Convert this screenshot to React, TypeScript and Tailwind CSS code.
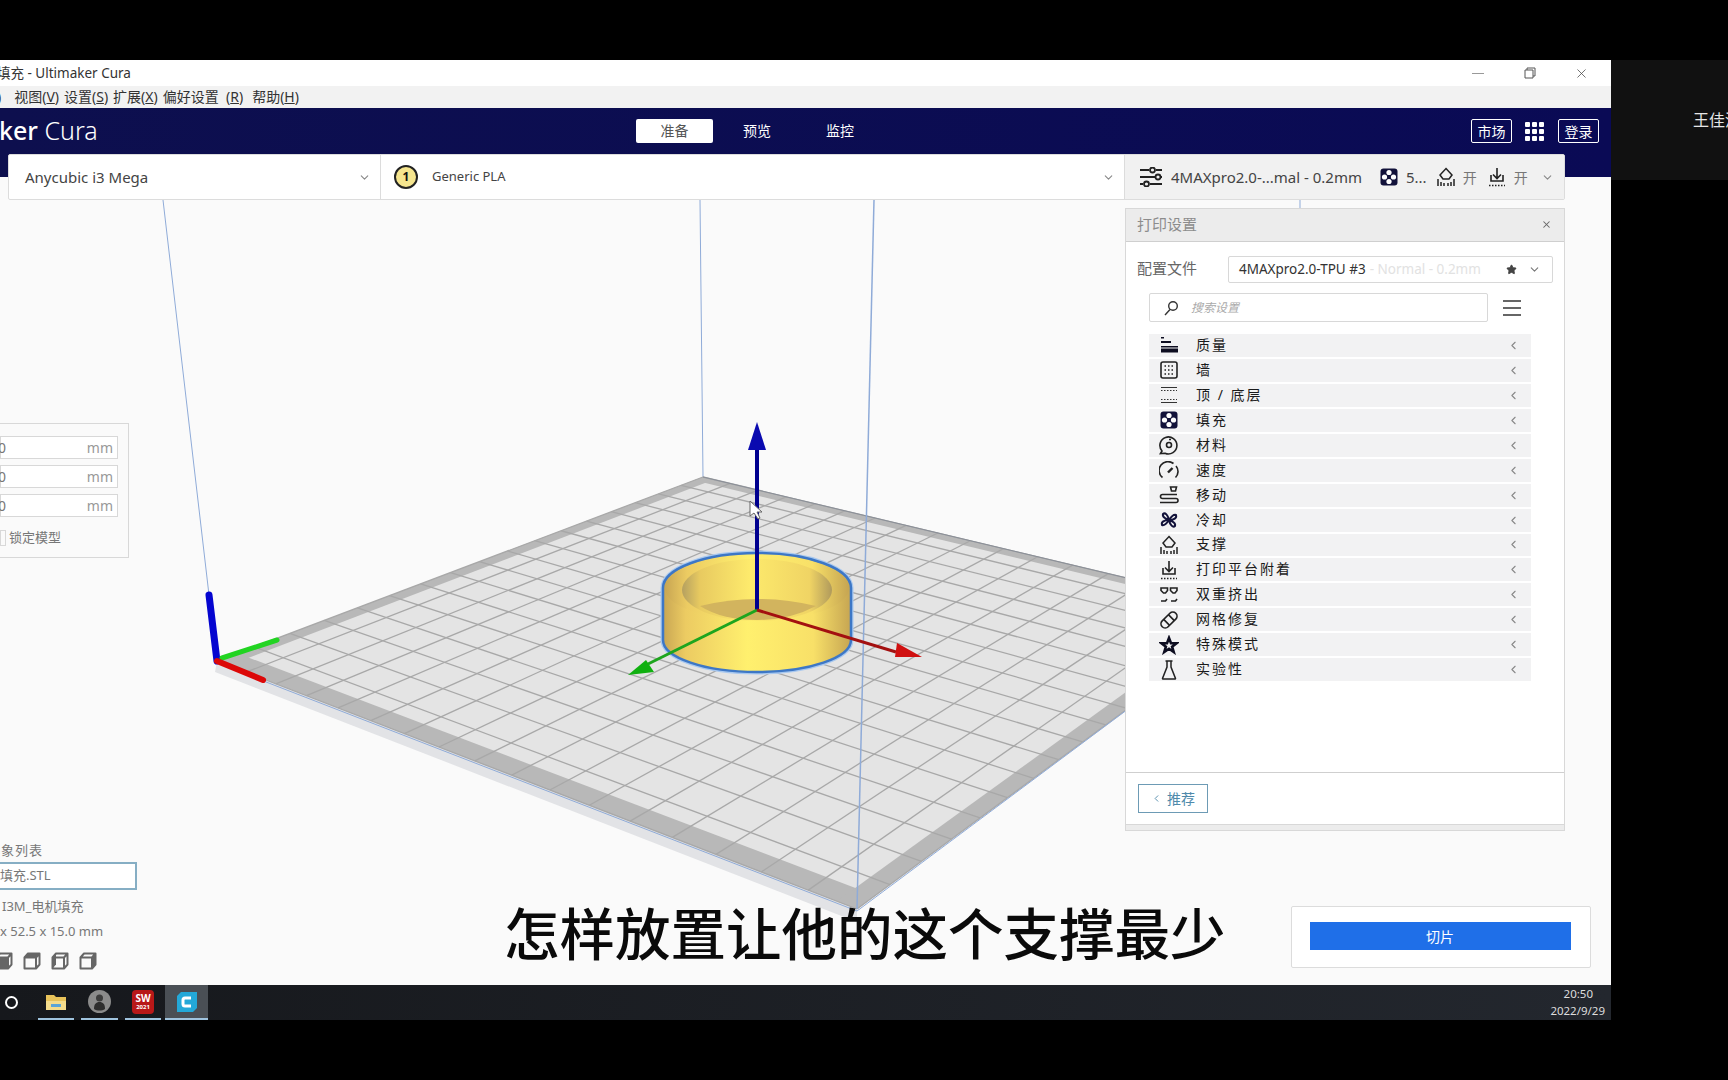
import React from "react"
import { ChevronDown, ChevronLeft, Star, X } from "lucide-react"

const ui = "font-['Noto_Sans','Noto_Sans_CJK_SC',sans-serif]"

const rows = [
  "质量",
  "墙",
  "顶 / 底层",
  "填充",
  "材料",
  "速度",
  "移动",
  "冷却",
  "支撑",
  "打印平台附着",
  "双重挤出",
  "网格修复",
  "特殊模式",
  "实验性",
]

const InfillIcon = ({ size = 18 }: { size?: number }) => (
  <svg width={size} height={size} viewBox="0 0 18 18">
    <rect x="0.5" y="0.5" width="17" height="17" rx="3" fill="#12123a" />
    <circle cx="9" cy="4.500" r="2.600" fill="#fff" />
    <circle cx="9" cy="13.500" r="2.600" fill="#fff" />
    <circle cx="4.500" cy="9" r="2.600" fill="#fff" />
    <circle cx="13.500" cy="9" r="2.600" fill="#fff" />
  </svg>
)

const SupportIcon = () => (
  <svg width="18" height="20" viewBox="0 0 18 20" fill="none" stroke="#222" strokeWidth="1.500">
    <path d="M9 1.500 15 8 12 12H6L3 8Z" />
    <path d="M1 19v-7M4 19v-4M7 19v-3M11 19v-3M14 19v-4M17 19v-7" />
  </svg>
)

const AdhesionIcon = () => (
  <svg width="18" height="20" viewBox="0 0 18 20" fill="none" stroke="#222" strokeWidth="1.600">
    <path d="M9 1v10M5 7.500 9 11.500 13 7.500M3 8v6h12V8" />
    <path d="M1 18.500h16" strokeDasharray="1.500 1.500" />
  </svg>
)

const SettingIcon = ({ index }: { index: number }) => {
  if (index === 0)
    return (
      <svg width="18" height="18" viewBox="0 0 18 18" fill="#0d0d20">
        <rect x="1" y="1" width="3" height="1.500" />
        <rect x="1" y="5" width="10" height="2" />
        <rect x="1" y="10" width="17" height="1.500" />
        <rect x="1" y="12.500" width="17" height="4" />
      </svg>
    )
  if (index === 1)
    return (
      <svg width="18" height="18" viewBox="0 0 18 18" fill="none" stroke="#222" strokeWidth="1.600">
        <rect x="1" y="1" width="16" height="16" rx="2" />
        <path d="M4.500 5h9M4.500 9h9M4.500 13h9" strokeDasharray="1.500 2" />
      </svg>
    )
  if (index === 2)
    return (
      <svg width="18" height="18" viewBox="0 0 18 18" fill="none" stroke="#333" strokeWidth="1">
        <path d="M1 1.500h16M1 16.500h16" />
        <path d="M1 4.500h16M1 13.500h16" strokeDasharray="1.500 1.500" />
      </svg>
    )
  if (index === 3) return <InfillIcon />
  if (index === 4)
    return (
      <svg width="20" height="20" viewBox="0 0 20 20" fill="none" stroke="#222" strokeWidth="1.600">
        <path d="M1.500 18.500 3 16A8.500 8.500 0 1 1 6 18.200Z" />
        <circle cx="10" cy="10" r="2.500" />
        <path d="M10 4.500h2" />
      </svg>
    )
  if (index === 5)
    return (
      <svg width="20" height="18" viewBox="0 0 20 18" fill="none" stroke="#222" strokeWidth="1.600">
        <path d="M3.500 16.500A8.500 8.500 0 0 1 14.500 2.500M17 5a8.500 8.500 0 0 1-.5 11.500" />
        <path d="M9 11.500 13.500 7" strokeWidth="2.400" />
      </svg>
    )
  if (index === 6)
    return (
      <svg width="20" height="18" viewBox="0 0 20 18" fill="none" stroke="#222" strokeWidth="1.600">
        <path d="M18 8.500H3.500a2 2 0 0 0 0 4H17a2 2 0 0 1 0 4H1" />
        <path d="M11.500 1h6l-1 4h-4Z" />
      </svg>
    )
  if (index === 7)
    return (
      <svg width="18" height="18" viewBox="0 0 18 18" fill="none" stroke="#12123a" strokeWidth="2">
        <path d="M9 9C6 8 2 6 3 3 5 1 8 4 9 9ZM9 9c2-3 4-6 7-5 1 3-2 5-7 5ZM9 9c3 1 7 3 6 6-2 2-5-1-6-6ZM9 9c-2 3-4 6-7 5-1-3 2-5 7-5Z" />
      </svg>
    )
  if (index === 8) return <SupportIcon />
  if (index === 9) return <AdhesionIcon />
  if (index === 10)
    return (
      <svg width="18" height="16" viewBox="0 0 18 16" fill="none" stroke="#222" strokeWidth="1.600">
        <path d="M1 1h6.500v2.500L5.500 6h-2L1 3.500ZM10.500 1H17v2.500L15 6h-2l-2.500-2.500Z" />
        <path d="M1 14h4.500l1.500-2M11 14h4.500l1.500-2" />
      </svg>
    )
  if (index === 11)
    return (
      <svg width="20" height="20" viewBox="0 0 24 24" fill="none" stroke="#222" strokeWidth="2">
        <g transform="rotate(-45 12 12)">
          <rect x="0.500" y="7" width="23" height="10" rx="5" />
          <path d="M8 7v10M16 7v10" />
        </g>
      </svg>
    )
  if (index === 12)
    return (
      <svg width="20" height="20" viewBox="0 0 20 20" fill="none" stroke="#0d0d20" strokeWidth="2.600" strokeLinejoin="miter">
        <path d="M10 3 12 8.300H17.500l-4.400 3.400L14.700 17 10 13.800 5.300 17l1.600-5.300L2.500 8.300H8Z" />
      </svg>
    )
  return (
    <svg width="16" height="20" viewBox="0 0 16 20" fill="none" stroke="#222" strokeWidth="1.500">
      <path d="M4.500 1h7M6 1v6L1.500 18.500a.5.5 0 0 0 .5.500h12a.5.5 0 0 0 .5-.500L10 7V1" />
    </svg>
  )
}

const P = [
  [703, 477],
  [1261, 610],
  [857, 909],
  [217, 661],
]

// homography from the unit square onto the bed's four corners
const project = (u: number, v: number) => {
  const [[x0, y0], [x1, y1], [x2, y2], [x3, y3]] = P
  const dx1 = x1 - x2
  const dx2 = x3 - x2
  const sx = x0 - x1 + x2 - x3
  const dy1 = y1 - y2
  const dy2 = y3 - y2
  const sy = y0 - y1 + y2 - y3
  const den = dx1 * dy2 - dx2 * dy1
  const g = (sx * dy2 - dx2 * sy) / den
  const h = (dx1 * sy - sx * dy1) / den
  const w = g * u + h * v + 1
  return [
    ((x1 - x0 + g * x1) * u + (x3 - x0 + h * x3) * v + x0) / w,
    ((y1 - y0 + g * y1) * u + (y3 - y0 + h * y3) * v + y0) / w,
  ]
}

const poly = (pts: number[][]) => pts.map((p) => p.join(",")).join(" ")

const Scene = () => {
  const n = 17
  const b = 0.024
  const f = 0.032
  const ticks = Array.from({ length: n + 1 }, (_, i) => i / n)
  const bands = [
    [[0, 0], [1, 0], [1, b], [0, b]],
    [[0, 1 - f], [1, 1 - f], [1, 1], [0, 1]],
    [[0, 0], [b, 0], [b, 1], [0, 1]],
    [[1 - b, 0], [1, 0], [1, 1], [1 - b, 1]],
  ]
  return (
    <svg className="absolute inset-0" width="1611" height="808" viewBox="0 177 1611 808">
      <defs>
        <linearGradient id="body" x1="0" x2="1" y1="0" y2="0">
          <stop offset="0" stopColor="#c8a653" />
          <stop offset="0.12" stopColor="#eccb62" />
          <stop offset="0.45" stopColor="#fff06e" />
          <stop offset="0.8" stopColor="#f8e068" />
          <stop offset="1" stopColor="#c6a552" />
        </linearGradient>
        <linearGradient id="wall" x1="0" x2="1" y1="0" y2="0">
          <stop offset="0" stopColor="#b5a060" />
          <stop offset="0.12" stopColor="#e8ca60" />
          <stop offset="0.45" stopColor="#fdea6c" />
          <stop offset="0.85" stopColor="#f0d464" />
          <stop offset="1" stopColor="#b09a5c" />
        </linearGradient>
      </defs>

      <g stroke="#8fabd8" strokeWidth="1" fill="none">
        <path d="M163 200 209 595" />
        <path d="M700 200 703 477" />
        <path d="M1300 200v10" />
      </g>

      <polygon points="217,661 857,909 857,922 215,672" fill="#e2e3e6" />
      <polygon points={poly(P)} fill="#e4e4e4" />
      {bands.map((q, i) => (
        <polygon key={i} points={poly(q.map(([u, v]) => project(u, v)))} fill="#b8b8b8" />
      ))}
      <g stroke="#a8a8a8" strokeWidth="1.300">
        {ticks.map((t) => {
          const a = project(t, 0)
          const c = project(t, 1)
          const d = project(0, t)
          const e = project(1, t)
          return (
            <g key={t}>
              <line x1={a[0]} y1={a[1]} x2={c[0]} y2={c[1]} />
              <line x1={d[0]} y1={d[1]} x2={e[0]} y2={e[1]} />
            </g>
          )
        })}
      </g>
      <path d="M703 477 1261 610" stroke="#8a8f98" strokeWidth="1" />
      <path d="M217 663 857 911 1261 610" stroke="#8fabd8" strokeWidth="1" fill="none" />
      <path d="M874 200 857 909" stroke="#8fabd8" strokeWidth="1.500" />

      <path d="M663 588A94 35 0 0 1 851 588V640A94 32 0 0 1 663 640Z" fill="url(#body)" stroke="#a8c8ef" strokeWidth="5" />
      <path d="M663 588A94 35 0 0 1 851 588V640A94 32 0 0 1 663 640Z" fill="url(#body)" stroke="#3d77c6" strokeWidth="2.500" />
      <ellipse cx="757" cy="588" rx="92" ry="33" fill="url(#body)" />
      <ellipse cx="757" cy="590" rx="75" ry="31" fill="url(#wall)" />
      <path d="M700 606Q757 592 816 606 790 620 757 620 722 620 700 606Z" fill="#d2b45e" />

      <g fill="none" strokeLinecap="butt">
        <path d="M757 450V610" stroke="#00008f" strokeWidth="4" />
        <path d="M757 610 648 664" stroke="#1ea51e" strokeWidth="3" />
        <path d="M757 610 896 652" stroke="#a31010" strokeWidth="3" />
      </g>
      <polygon points="757,422 766,450 748,450" fill="#0a0ab0" />
      <polygon points="628,675 646,660 654,672" fill="#10b010" />
      <polygon points="922,657 897,643 895,657" fill="#d01010" />

      <path d="M750 501V516L754 513 758 519 760 518 757 512 762 512Z" fill="#fff" stroke="#666" strokeWidth="1" />

      <path d="M209 595 217 661" stroke="#0505d0" strokeWidth="7" strokeLinecap="round" />
      <path d="M222 658 277 640" stroke="#22d422" strokeWidth="5" strokeLinecap="round" />
      <path d="M217 661 263 680" stroke="#dc0808" strokeWidth="6" strokeLinecap="round" />
    </svg>
  )
}

const PrintSettings = () => (
  <div className="absolute left-[1125px] top-[31px] z-20 flex h-[623px] w-[440px] flex-col border border-[#d8d8d8] bg-white">
    <div className="flex h-[33px] shrink-0 items-center justify-between border-b border-[#cfcfcf] bg-[#ececec] pb-[2px] pl-[11px] pr-[13px] text-[15px] text-[#8c8c8c]">
      <span>打印设置</span>
      <X size={11} strokeWidth={2.200} className="-mr-[1px] text-[#666]" />
    </div>
    <div className="mt-[14px] flex items-center pl-[11px] pr-[11px]">
      <span className="w-[91px] shrink-0 pb-[2px] text-[15px] text-[#666]">配置文件</span>
      <div className="flex h-[27px] flex-1 items-center rounded-[2px] border border-[#d8d8d8] pl-[10px] pr-[11px] text-[13.500px]">
        <span className="text-[#333]">4MAXpro2.0-TPU #3</span>
        <span className="ml-1 text-[#e2e2e2]">- Normal - 0.2mm</span>
        <Star size={11} fill="#444" stroke="#444" className="ml-auto" />
        <ChevronDown size={13} className="ml-[11px] text-[#777]" />
      </div>
    </div>
    <div className="mt-[10px] flex items-center pl-[23px]">
      <div className="flex h-[29px] w-[339px] items-center gap-[12px] rounded-[2px] border border-[#d8d8d8] pl-[13px]">
        <svg width="16" height="16" viewBox="0 0 16 16" fill="none" stroke="#333" strokeWidth="1.400">
          <circle cx="10" cy="6" r="4.300" />
          <path d="M7 9.500 2 15" />
        </svg>
        <span className="text-[12px] italic text-[#aaa]">搜索设置</span>
      </div>
      <div className="ml-[15px] flex w-[18px] flex-col gap-[5px]">
        <div className="h-[2px] bg-[#666]" />
        <div className="h-[2px] bg-[#666]" />
        <div className="h-[2px] bg-[#666]" />
      </div>
    </div>
    <div className="mt-[12px] ml-[23px] flex w-[382px] flex-col gap-[2px]">
      {rows.map((row, i) => (
        <div key={row} className="flex h-[22.950px] items-center bg-[#f2f2f3] pr-[11px] text-[14px] tracking-[2px] text-[#1a1a1a]">
          <div className="flex w-[47px] shrink-0 justify-center pr-[7px]">
            <SettingIcon index={i} />
          </div>
          <span className="whitespace-pre pb-[2px]">{row}</span>
          <ChevronLeft size={13} className="ml-auto text-[#888]" />
        </div>
      ))}
    </div>
    <div className="mt-auto flex h-[52px] items-start border-t border-[#cfcfcf] pl-[12px] pt-[11px]">
      <div className="flex h-[29px] w-[70px] items-center justify-center gap-[5px] border border-[#6d9bb5] text-[14px] text-[#4f8aab]">
        <ChevronLeft size={11} />
        <span>推荐</span>
      </div>
    </div>
    <div className="h-[6px] shrink-0 border-t border-[#d8d8d8] bg-[#ececec]" />
  </div>
)

const Field = ({ value }: { value: string }) => (
  <div className="flex h-[23px] w-[118px] items-center justify-between border border-[#d8d8d8] bg-white pr-[4px] text-[14px]">
    <span className="-ml-[3px] text-[#777]">{value}</span>
    <span className="text-[#999]">mm</span>
  </div>
)

const CubeIcon = ({ faces }: { faces: string }) => (
  <svg width="18" height="18" viewBox="0 0 18 18" fill="none" stroke="#666" strokeWidth="2" strokeLinejoin="round">
    <path d={faces} fill="#666" stroke="none" />
    <path d="M1.500 5.500 5 1.500H16.500V12.500L13 16.500H1.500ZM1.500 5.500H13V16.500M13 5.500 16.500 1.500" />
  </svg>
)

const App = () => (
  <div className={`flex h-[1080px] w-[1728px] flex-col overflow-hidden bg-black ${ui}`}>
    <div className="h-[60px] shrink-0" />
    <div className="flex h-[960px] shrink-0">
      <div className="flex w-[1611px] shrink-0 flex-col overflow-hidden">
        <div className="flex h-[26px] shrink-0 items-center bg-white text-[13.500px] text-[#333]">
          <span className="-ml-[3px]">填充 - Ultimaker Cura</span>
          <div className="ml-auto flex items-center pr-[22px]">
            <div className="h-px w-[12px] bg-[#999]" />
            <svg className="ml-[40px]" width="12" height="12" viewBox="0 0 12 12" fill="none" stroke="#555" strokeWidth="1">
              <path d="M1 3h8v8H1ZM3 3V1h8v8H9" />
            </svg>
            <X className="ml-[38px] text-[#444]" size={15} strokeWidth={1.200} />
          </div>
        </div>
        <div className="flex h-[22px] shrink-0 items-center gap-[5px] bg-[#f2f2f2] pb-[1px] text-[14px] text-[#333]">
          <span className="-ml-[3px] mr-[8px]">)</span>
          <span>视图(<u>V</u>)</span>
          <span>设置(<u>S</u>)</span>
          <span>扩展(<u>X</u>)</span>
          <span className="whitespace-pre">偏好设置  (<u>R</u>)</span>
          <span className="ml-[4px]">帮助(<u>H</u>)</span>
        </div>
        <div className="relative flex h-[69px] shrink-0 items-start bg-[#0d0f52] bg-gradient-to-r from-[#0d0f4e] to-[#0a0a55] pt-[7px] text-white">
          <span className="-ml-[1px] text-[25px] leading-[30px]">
            <b className="font-medium">ker</b> <span className="font-light">Cura</span>
          </span>
          <div className="absolute left-[636px] top-[11px] flex items-center text-[14px]">
            <div className="flex h-[24px] w-[77px] items-center justify-center rounded-[2px] bg-white pb-[2px] text-[#555]">准备</div>
            <span className="ml-[30px] pb-[2px]">预览</span>
            <span className="ml-[55px] pb-[2px]">监控</span>
          </div>
          <div className="ml-auto mr-[12px] mt-[4px] flex items-center text-[14px]">
            <div className="flex h-[24px] w-[41px] items-center justify-center rounded-[2px] border border-white">市场</div>
            <div className="ml-[13px] grid grid-cols-3 gap-[2px]">
              {Array.from({ length: 9 }, (_, i) => (
                <div key={i} className="h-[5px] w-[5px] rounded-[1px] bg-white" />
              ))}
            </div>
            <div className="ml-[14px] flex h-[24px] w-[41px] items-center justify-center rounded-[2px] border border-white">登录</div>
          </div>
        </div>
        <div className="relative flex-1 bg-[#fafafa]">
          <Scene />

          <div className="absolute left-[8px] top-[-23px] z-10 flex h-[46px] w-[1557px] items-stretch rounded-[2px] border border-[#dcdcdc] bg-white">
            <div className="flex w-[372px] shrink-0 items-center border-r border-[#dcdcdc] pl-[16px] pr-[9px] text-[15px] text-[#444]">
              Anycubic i3 Mega
              <ChevronDown size={13} className="ml-auto text-[#888]" />
            </div>
            <div className="flex flex-1 items-center border-r border-[#dcdcdc] pl-[13px] pr-[9px] text-[13px] text-[#444]">
              <div className="flex h-[24px] w-[24px] items-center justify-center rounded-full border-2 border-[#222] bg-[#f5e58e] text-[12px] font-bold text-[#111]">1</div>
              <span className="ml-[14px]">Generic PLA</span>
              <ChevronDown size={13} className="ml-auto text-[#888]" />
            </div>
            <div className="flex w-[439px] shrink-0 items-center bg-[#f1f1f1] pl-[14px] pr-[10px] text-[15px] text-[#444]">
              <svg width="24" height="20" viewBox="0 0 24 20" fill="none" stroke="#222" strokeWidth="1.800">
                <path d="M1 3h9M17 3h6M1 10h15M22 10h1M1 17h3M11 17h12" />
                <circle cx="13.500" cy="3" r="2.500" />
                <circle cx="19" cy="10" r="2.500" />
                <circle cx="7.500" cy="17" r="2.500" />
              </svg>
              <span className="ml-[8px]">4MAXpro2.0-...mal - 0.2mm</span>
              <div className="ml-[18px]"><InfillIcon /></div>
              <span className="ml-[8px]">5...</span>
              <div className="ml-[10px]"><SupportIcon /></div>
              <span className="ml-[8px] text-[14px] text-[#777]">开</span>
              <div className="ml-[11px]"><AdhesionIcon /></div>
              <span className="ml-[8px] text-[14px] text-[#777]">开</span>
              <ChevronDown size={13} className="ml-auto text-[#888]" />
            </div>
          </div>

          <PrintSettings />

          <div className="absolute left-[-1px] top-[246px] flex h-[135px] w-[130px] flex-col gap-[6px] border border-[#d8d8d8] pt-[12px]">
            <Field value="0" />
            <Field value="0" />
            <Field value="0" />
            <div className="mt-[5px] flex items-center gap-[3px] text-[13px] text-[#777]">
              <div className="h-[16px] w-[6px] border border-[#d8d8d8]" />
              <span>锁定模型</span>
            </div>
          </div>

          <div className="absolute left-0 top-[664px] flex w-[137px] flex-col text-[13px] text-[#777]">
            <span className="-ml-[13px] whitespace-nowrap tracking-[1px]">对象列表</span>
            <div className="mt-[1px] flex h-[28px] items-center border-2 border-l-0 border-[#86aec4] bg-white">
              <span>填充.STL</span>
            </div>
            <span className="mt-[7px] whitespace-nowrap pl-[2px]">I3M_电机填充</span>
            <span className="mt-[6px] whitespace-nowrap">x 52.5 x 15.0 mm</span>
            <div className="mt-[10px] -ml-[5px] flex gap-[10px]">
              <CubeIcon faces="M1.500 5.500H13V16.500H1.500Z" />
              <CubeIcon faces="M1.500 5.500 5 1.500H16.500L13 5.500Z" />
              <CubeIcon faces="M1.500 5.500 5 1.500V12.500L1.500 16.500Z" />
              <CubeIcon faces="M13 5.500 16.500 1.500V12.500L13 16.500Z" />
            </div>
          </div>

          <div className="absolute left-[1291px] top-[729px] z-10 flex h-[62px] w-[300px] items-center justify-center rounded-[2px] border border-[#dcdcdc] bg-white pb-[2px] pr-[2px]">
            <div className="flex h-[28px] w-[261px] items-center justify-center bg-[#1f6fe8] text-[14px] text-white">切片</div>
          </div>

          <div className="absolute left-[504px] top-[719px] z-20 whitespace-nowrap font-['Noto_Sans_CJK_SC',sans-serif] text-[55.500px] font-medium leading-[70px] text-[#0a0a0a]">
            怎样放置让他的这个支撑最少
          </div>
        </div>
        <div className="flex h-[35px] shrink-0 items-stretch bg-[#1f2228] bg-gradient-to-r from-[#16181c] to-[#23272e] text-white">
          <div className="ml-[5px] mt-[11px] h-[13px] w-[13px] rounded-full border-2 border-white" />
          <div className="ml-[20px] flex w-[36px] items-center justify-center border-b-2 border-[#9fc3de]">
            <svg width="22" height="18" viewBox="0 0 22 18">
              <path d="M1 2h8l2 2h10v13H1Z" fill="#e8c35a" />
              <path d="M1 8h20v9H1Z" fill="#f4dc8c" />
              <path d="M6 11h10v3H6Z" fill="#5aa5d8" />
            </svg>
          </div>
          <div className="ml-[7px] flex w-[37px] items-center justify-center border-b-2 border-[#9fc3de]">
            <svg width="23" height="23" viewBox="0 0 23 23">
              <circle cx="11.500" cy="11.500" r="11.500" fill="#8b8b8b" />
              <path d="M6 19c0-5 2-7 5.500-7S17 14 17 19c-3 2-8 2-11 0Z" fill="#2e2e2e" />
              <circle cx="11.500" cy="8" r="3.500" fill="#3c3c3c" />
            </svg>
          </div>
          <div className="ml-[7px] flex w-[36px] items-center justify-center border-b-2 border-[#9fc3de]">
            <div className="flex h-[24px] w-[22px] flex-col items-center justify-center rounded-[4px] bg-[#b81818] font-bold text-white">
              <span className="text-[10px] leading-[11px]">SW</span>
              <span className="text-[6px] leading-[7px]">2021</span>
            </div>
          </div>
          <div className="ml-[4px] flex w-[43px] items-center justify-center border-b-2 border-[#9fc3de] bg-[#4a4f55]">
            <svg width="22" height="22" viewBox="0 0 22 22">
              <path d="M5 1h16v16l-4 4H1V5Z" fill="#23a8d8" />
              <path d="M15 7H9a2 2 0 0 0-2 2v4a2 2 0 0 0 2 2h6" fill="none" stroke="#fff" strokeWidth="3" />
            </svg>
          </div>
          <div className="ml-auto flex flex-col items-end justify-center pb-[1px] pr-[6px] text-[11.500px] leading-[17px] text-[#ddd]">
            <span className="pr-[12px]">20:50</span>
            <span>2022/9/29</span>
          </div>
        </div>
      </div>
      <div className="flex h-[120px] flex-1 items-center overflow-hidden bg-[#111] pl-[82px] text-[16px] text-[#e6e6e6]">
        <span className="whitespace-nowrap">王佳淇</span>
      </div>
    </div>
  </div>
)

export default App
